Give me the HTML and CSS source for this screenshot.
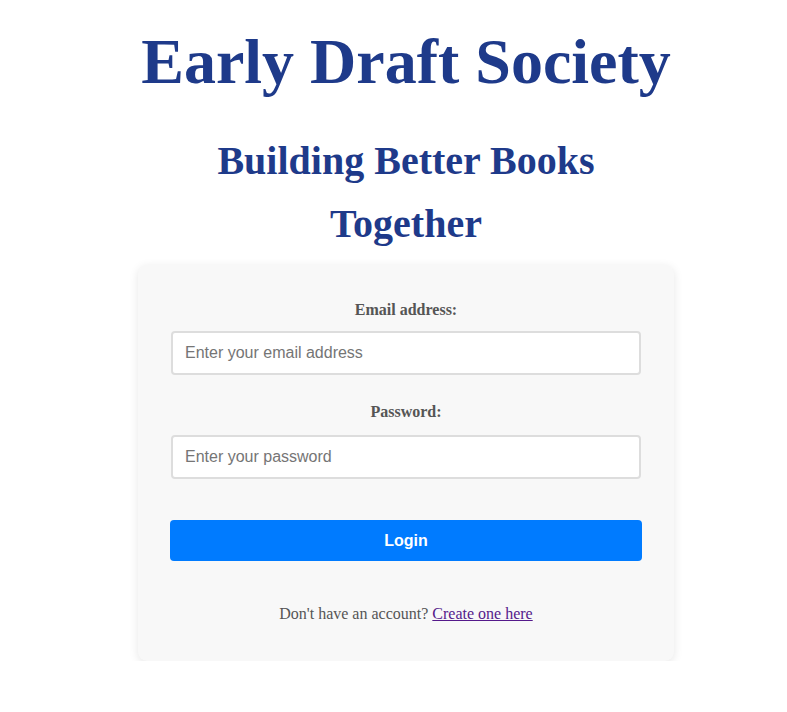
FILE: index.html
```html
<!DOCTYPE html>
<html lang="en">
<head>
<meta charset="utf-8">
<title>Early Draft Society</title>
<link rel="stylesheet" href="styles.css">
</head>
<body>
<main class="page">
  <h1 class="title">Early Draft Society</h1>
  <h2 class="subtitle">Building Better Books Together</h2>
  <form class="card">
    <div class="field">
      <label class="label" for="email">Email address:</label>
      <input class="input" id="email" type="email" placeholder="Enter your email address">
    </div>
    <div class="field">
      <label class="label" for="password">Password:</label>
      <input class="input" id="password" type="password" placeholder="Enter your password">
    </div>
    <button class="btn" type="button">Login</button>
    <p class="footer">Don't have an account? <a class="link" href="#">Create one here</a></p>
  </form>
</main>
</body>
</html>
```

FILE: styles.css
```css
html, body {
  margin: 0;
  padding: 0;
  background: #ffffff;
}
body {
  font-family: "Liberation Serif", "Times New Roman", serif;
  padding-left: 25px;
}
.page {
  width: 536px;
  margin: 0 auto;
  display: flex;
  flex-direction: column;
  align-items: stretch;
}
.title {
  margin: 22px -20px 0;
  font-size: 64px;
  line-height: 80px;
  white-space: nowrap;
  font-weight: bold;
  color: #1e3a8a;
  text-align: center;
}
.subtitle {
  margin: 27px 0 0;
  font-size: 40px;
  line-height: 63px;
  font-weight: bold;
  color: #1e3a8a;
  text-align: center;
}
.card {
  margin-top: 10px;
  background: #f8f8f8;
  border-radius: 9px;
  box-shadow: 0 2px 10px rgba(0, 0, 0, 0.1);
  padding: 36px 33px 38px;
  display: flex;
  flex-direction: column;
}
.field {
  display: flex;
  flex-direction: column;
  margin-bottom: 28px;
}
.field + .field {
  margin-bottom: 41px;
}
.label {
  display: block;
  text-align: center;
  font-weight: bold;
  font-size: 16px;
  line-height: 18px;
  color: #555555;
  margin-bottom: 12px;
}
.field + .field .label {
  margin-bottom: 14px;
}
.input {
  box-sizing: border-box;
  width: 100%;
  height: 44px;
  margin: 0;
  padding: 0 12px;
  border: 2px solid #dddddd;
  border-radius: 4px;
  background: #ffffff;
  font-family: "Liberation Sans", Arial, sans-serif;
  font-size: 16px;
  color: #333333;
}
.input::placeholder {
  color: #757575;
}
.btn {
  box-sizing: border-box;
  height: 41px;
  margin: 0 -1px;
  width: calc(100% + 2px);
  border: none;
  border-radius: 4px;
  background: #007bff;
  color: #ffffff;
  font-family: "Liberation Sans", Arial, sans-serif;
  font-weight: bold;
  font-size: 16px;
}
.footer {
  margin: 44px 0 0;
  text-align: center;
  font-size: 16px;
  line-height: 18px;
  color: #555555;
}
.link {
  color: #551a8b;
}
```
